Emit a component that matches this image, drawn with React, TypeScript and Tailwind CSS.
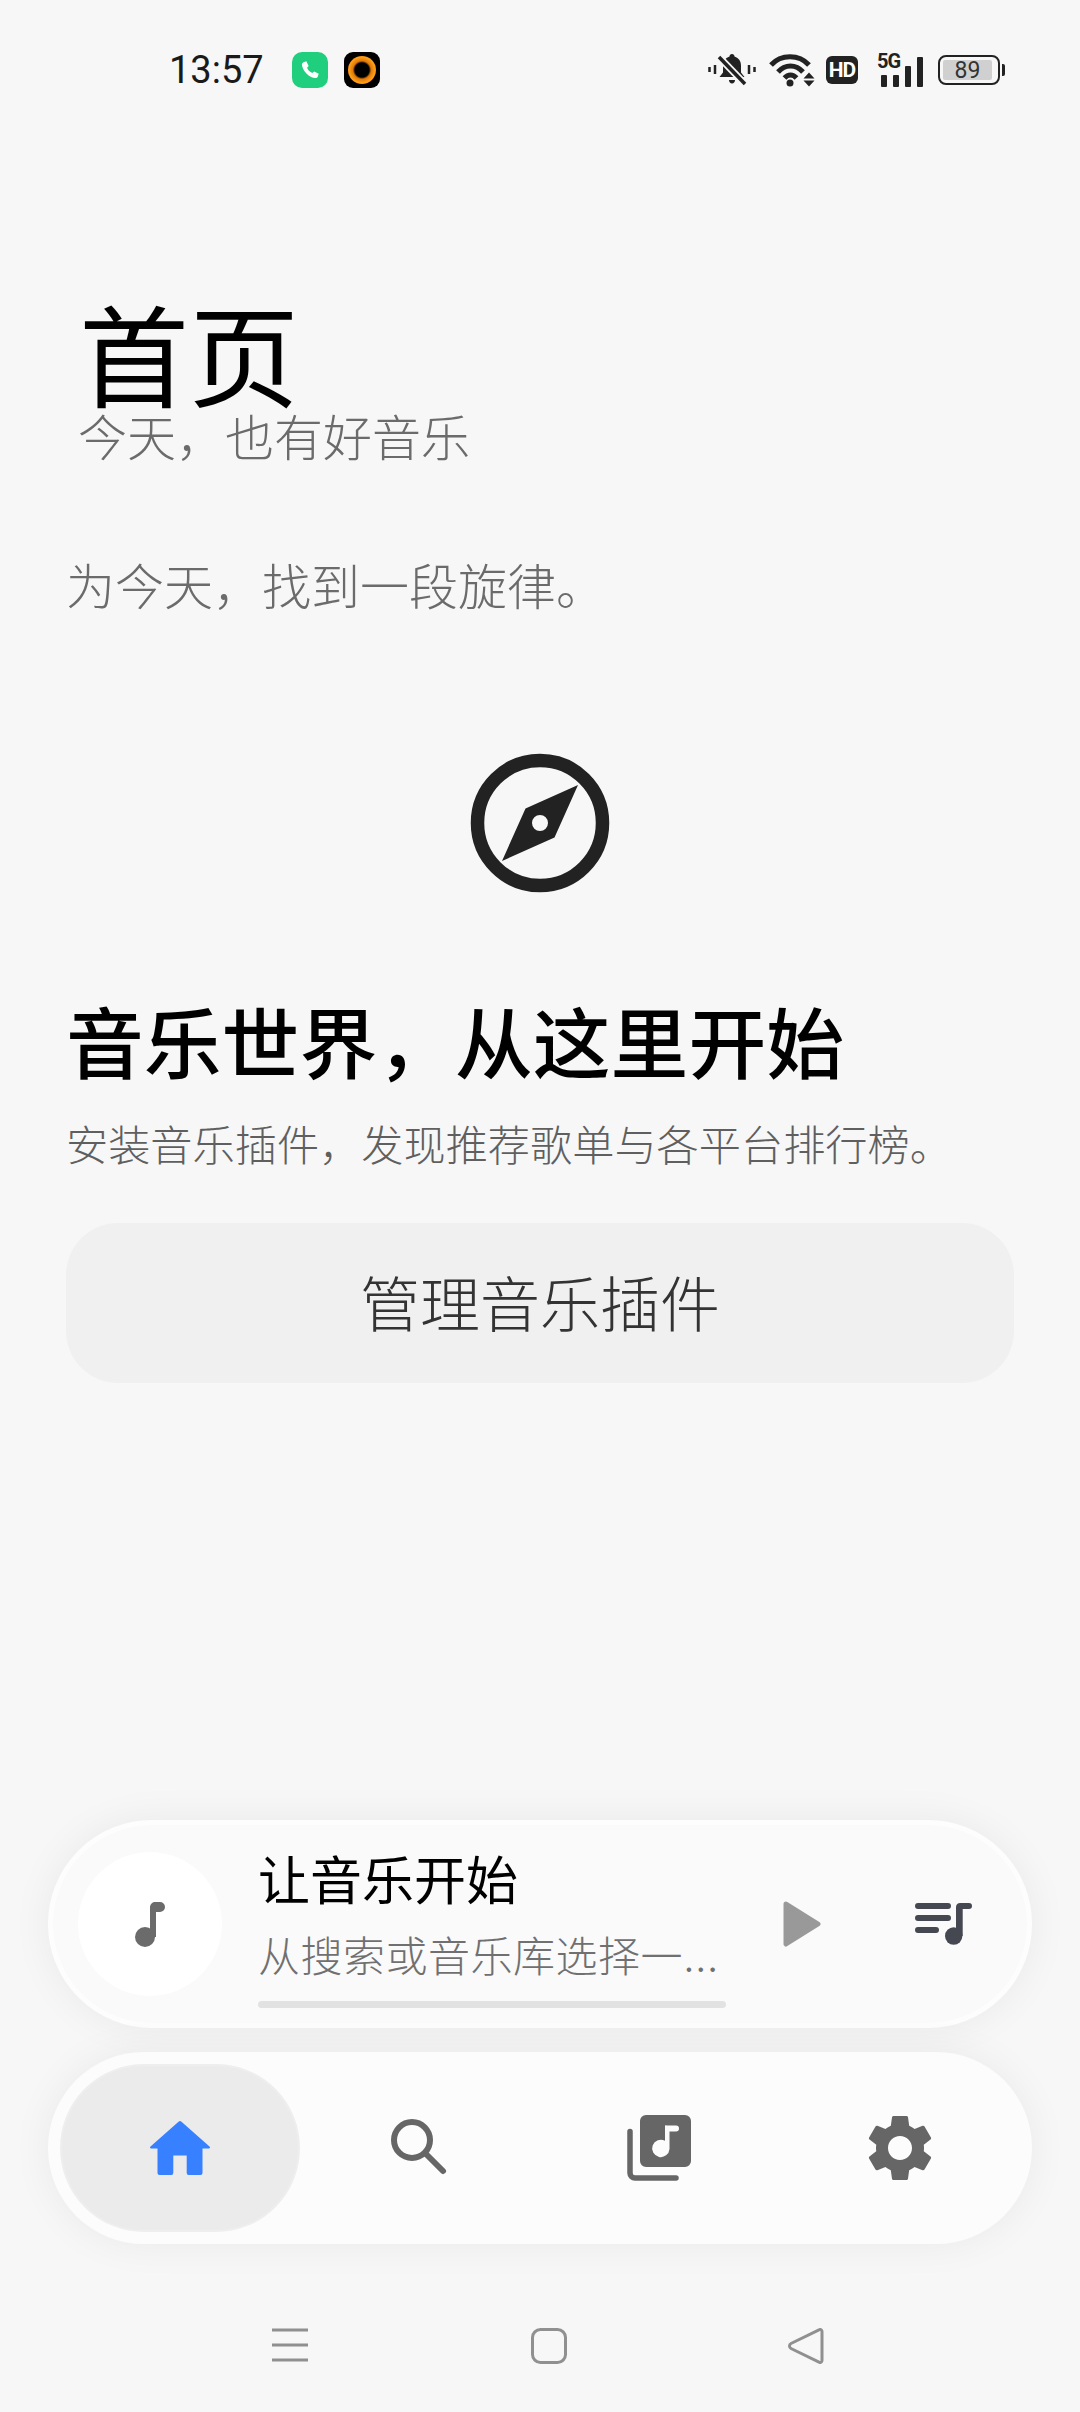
import React from 'react';
import { MdSettings } from 'react-icons/md';

const StatusBar: React.FC = () => (
    <div className="h-[140px] shrink-0 flex items-center pl-[169px] pr-[75px]">
        <span className="text-[38px] leading-[44px] text-[#1a1a1a] w-[123px]">13:57</span>
        <div className="w-[36px] h-[36px] rounded-[10px] bg-[#20cf7e] flex items-center justify-center">
            <svg width="22" height="22" viewBox="0 0 24 24">
                <path d="M5 3.500 8 2.500 10.500 7.500 8.800 9.500C9.800 12 12 14.200 14.500 15.200L16.500 13.500 21.500 16 20.500 19C20 20.500 18.500 21 17 20.700 10.500 19.500 4.500 13.500 3.300 7 3 5.500 3.500 4 5 3.500Z" fill="#fff" />
            </svg>
        </div>
        <div className="ml-[16px] w-[36px] h-[36px] rounded-[9px] bg-black flex items-center justify-center">
            <div className="w-[28px] h-[28px] rounded-full bg-[radial-gradient(circle,#000_0%,#000_36%,#e07808_46%,#ffa018_66%,#d86a08_86%,#3a1a02_100%)]" />
        </div>
        <div className="ml-auto flex items-center">
            <svg width="48" height="34" viewBox="0 0 48 34">
                <path d="M24 1c1.500 0 2.500 1 2.500 2.500 4.500 1.500 6.500 5 6.500 9v7l3.500 4.500H11.500L15 19.500v-7c0-4 2-7.500 6.500-9C21.500 2 22.500 1 24 1Z" fill="#222" />
                <path d="M21 27h6c0 2-1.300 3.500-3 3.500S21 29 21 27Z" fill="#222" />
                <path d="M11 4 37 31" stroke="#f7f7f7" strokeWidth="7" />
                <path d="M11 4 37 31" stroke="#222" strokeWidth="3.500" />
                <path d="M1.500 14v5M7 12v9M41 12v9M46.500 14v5" stroke="#222" strokeWidth="2.500" />
            </svg>
            <svg className="ml-[13px]" width="46" height="34" viewBox="0 0 46 34">
                <path d="M2 12C12 1 30 1 40 12M9 19C16 11 27 11 34 19M15.500 25C19 21 24 21 27.500 25" fill="none" stroke="#222" strokeWidth="5" />
                <circle cx="21" cy="30" r="3.500" fill="#222" />
                <path d="M40 19.500 45.500 25.500H34.500ZM40 33.500 45.500 27.500H34.500Z" fill="#222" />
            </svg>
            <div className="ml-[11px] w-[32px] h-[28px] rounded-[6px] bg-[#222] flex items-center justify-center">
                <span className="text-white text-[21px] leading-none font-bold tracking-[-1px]">HD</span>
            </div>
            <div className="relative ml-[19px] w-[46px] h-[34px] flex items-end gap-[6px] pl-[4px]">
                <span className="absolute left-0 -top-[2px] text-[20px] leading-[20px] font-bold tracking-[-1px] text-[#222]">5G</span>
                <div className="w-[6px] h-[12px] rounded-[1px] bg-[#222]" />
                <div className="w-[6px] h-[12px] rounded-[1px] bg-[#222]" />
                <div className="w-[6px] h-[21px] rounded-[1px] bg-[#222]" />
                <div className="w-[6px] h-[30px] rounded-[1px] bg-[#222]" />
            </div>
            <div className="ml-[15px] flex items-center">
                <div className="w-[62px] h-[30px] rounded-[8px] border-[2px] border-[#222] p-[3px] flex">
                    <div className="w-[49px] h-full rounded-[2px] bg-[#d0d0d0] flex items-center justify-center">
                        <span className="text-[23px] leading-none text-[#333]">89</span>
                    </div>
                </div>
                <div className="ml-[2px] w-[3px] h-[12px] rounded-r-[2px] bg-[#222]" />
            </div>
        </div>
    </div>
);

const CompassIcon: React.FC = () => (
    <svg width="140" height="140" viewBox="0 0 140 140">
        <circle cx="70" cy="70" r="62.500" fill="none" stroke="#222" strokeWidth="13.500" />
        <path fillRule="evenodd" d="M108 32 84.500 84.500 32 108 55.500 55.500ZM70 62a8 8 0 1 0 0 16 8 8 0 0 0 0-16Z" fill="#222" />
    </svg>
);

const MiniPlayer: React.FC = () => (
    <div className="h-[208px] rounded-[104px] bg-[#fafafa] border-[5px] border-[#fdfdfd] shadow-[0_0_40px_rgba(0,0,0,0.06)] flex items-center pl-[25px]">
        <div className="w-[144px] h-[144px] rounded-full bg-white flex items-center justify-center shrink-0">
            <svg width="30" height="45" viewBox="0 0 30 45">
                <circle cx="10" cy="35" r="10" fill="#6b6b6b" />
                <path d="M15 35V5.500C15 2.500 17 0 20 0h5a5 5 0 0 1 0 10h-4v25Z" fill="#6b6b6b" />
            </svg>
        </div>
        <div className="ml-[36px] w-[468px] pt-[12px] flex flex-col">
            <span className="text-[52px] leading-[60px] text-black">让音乐开始</span>
            <span className="mt-[14px] text-[42px] leading-[60px] tracking-[0.5px] text-[#707070] font-light font-[Inter,'Noto_Sans_CJK_SC',sans-serif] truncate">从搜索或音乐库选择一段旋律</span>
            <div className="mt-[14px] h-[7px] rounded-full bg-[#e2e2e2]" />
        </div>
        <svg className="ml-[57px]" width="38" height="46" viewBox="0 0 38 46">
            <path d="M3 3 35 23 3 43Z" fill="#999" stroke="#999" strokeWidth="5" strokeLinejoin="round" />
        </svg>
        <svg className="ml-[94px]" width="58" height="42" viewBox="0 0 58 42">
            <path d="M3 3H33M3 15H33M3 27H21" stroke="#464851" strokeWidth="6" strokeLinecap="round" />
            <circle cx="38.700" cy="33" r="8.700" fill="#464851" />
            <path d="M41 33V4C41 1.500 43 0 45 0h9a3 3 0 0 1 0 6h-6.300v27Z" fill="#464851" />
        </svg>
    </div>
);

const NavBar: React.FC = () => (
    <div className="h-[192px] rounded-[96px] bg-[#fcfcfc] shadow-[0_0_40px_rgba(0,0,0,0.06)] p-[12px] grid grid-cols-4">
        <div className="rounded-[84px] bg-[#ebebeb] border-[2px] border-[#eeeeee] flex items-center justify-center">
            <svg width="60" height="54" viewBox="0 0 60 54">
                <path fillRule="evenodd" d="M28.800.500a2 2 0 0 1 2.400 0L59.500 25.500c1 1 .500 2-.800 2H52.500v24.500a2 2 0 0 1-2 2H38.700a2 2 0 0 1-2-2V34.500H23.300V52a2 2 0 0 1-2 2H9.500a2 2 0 0 1-2-2V27.500H1.300c-1.300 0-1.800-1-.800-2Z" fill="#3780ff" />
            </svg>
        </div>
        <div className="flex items-center justify-center">
            <svg width="58" height="58" viewBox="0 0 58 58">
                <circle cx="21" cy="21" r="18" fill="none" stroke="#666" strokeWidth="6" />
                <path d="M36 36 52 52" stroke="#666" strokeWidth="6" strokeLinecap="round" />
            </svg>
        </div>
        <div className="flex items-center justify-center">
            <svg width="66" height="66" viewBox="0 0 66 66">
                <path fillRule="evenodd" d="M19 0H58a6 6 0 0 1 6 6V46a6 6 0 0 1-6 6H19a6 6 0 0 1-6-6V6a6 6 0 0 1 6-6ZM38 10.500V25.800A8.700 8.700 0 1 0 42.500 34V16.500H49a3 3 0 0 0 0-6H40a2 2 0 0 0-2 0Z" fill="#666" />
                <path d="M3 16.500V58a5 5 0 0 0 5 5H49" fill="none" stroke="#666" strokeWidth="5.500" strokeLinecap="round" />
            </svg>
        </div>
        <div className="flex items-center justify-center">
            <MdSettings size={80} color="#666" />
        </div>
    </div>
);

const SystemNav: React.FC = () => (
    <div className="h-[168px] shrink-0 flex items-start justify-center pt-[84px] pl-[16px]">
        <svg width="36" height="34" viewBox="0 0 36 34">
            <path d="M0 2H36M0 17H36M0 32H36" stroke="#909090" strokeWidth="3" />
        </svg>
        <svg className="ml-[223px]" width="36" height="36" viewBox="0 0 36 36">
            <rect x="1.500" y="1.500" width="33" height="33" rx="8" fill="none" stroke="#909090" strokeWidth="3" />
        </svg>
        <svg className="ml-[221px]" width="36" height="36" viewBox="0 0 36 36">
            <path d="M3 15.500 31 1.800c1.500-.800 3 0 3 1.700v29c0 1.700-1.500 2.500-3 1.700L3 20.500c-2-1-2-4 0-5Z" fill="none" stroke="#909090" strokeWidth="3" strokeLinejoin="round" />
        </svg>
    </div>
);

const App: React.FC = () => {
    return (
        <div className="w-[1080px] h-[2412px] bg-[#f7f7f7] flex flex-col overflow-hidden font-[Roboto,'Noto_Sans_CJK_SC',sans-serif]">
            <StatusBar />
            <main className="flex-1 flex flex-col px-[66px]">
                <h1 className="mt-[168px] ml-[13px] text-[110px] leading-[108px] font-normal text-black">首页</h1>
                <p className="-mt-[6px] ml-[12px] text-[49px] leading-[60px] font-light text-[#6b6b6b]">今天，也有好音乐</p>
                <p className="mt-[89px] text-[49px] leading-[60px] font-light text-[#6b6b6b]">为今天，找到一段旋律。</p>
                <div className="mt-[134px] flex justify-center">
                    <CompassIcon />
                </div>
                <h2 className="mt-[109px] text-[77.800px] leading-[90px] font-medium text-black">音乐世界，从这里开始</h2>
                <p className="mt-[25px] text-[42.200px] leading-[60px] font-light text-[#5f5f5f]">安装音乐插件，发现推荐歌单与各平台排行榜。</p>
                <button className="mt-[46px] h-[160px] pt-[8px] rounded-[52px] bg-[#f0f0f0] text-[60px] font-light text-[#333] flex items-center justify-center">
                    管理音乐插件
                </button>
            </main>
            <div className="shrink-0 flex flex-col gap-[24px] px-[48px]">
                <MiniPlayer />
                <NavBar />
            </div>
            <SystemNav />
        </div>
    );
};

export default App;
